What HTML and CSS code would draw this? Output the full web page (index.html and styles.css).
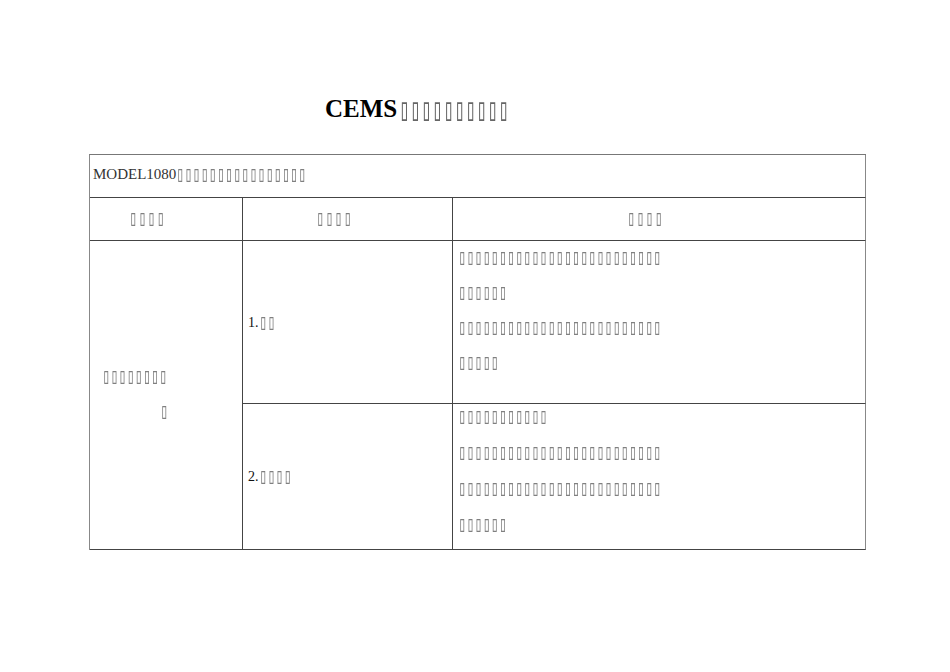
FILE: index.html
```html
<!DOCTYPE html>
<html lang="zh">
<head>
<meta charset="utf-8">
<title>CEMS</title>
<link rel="stylesheet" href="styles.css">
</head>
<body>
<div class="page">
  <h1 class="title">CEMS <span class="t tt">▯▯▯▯▯▯▯▯▯▯</span></h1>
  <div class="table">
    <div class="cell head-row"><span>MODEL1080<span class="t th">▯▯▯▯▯▯▯▯▯▯▯▯▯▯▯▯</span></span></div>
    <div class="cell hc hc1"><span class="t hx">▯▯▯▯</span></div>
    <div class="cell hc hc2"><span class="t hx">▯▯▯▯</span></div>
    <div class="cell hc hc3"><span class="t hx">▯▯▯▯</span></div>
    <div class="cell c-cat">
      <div class="cat-l1"><span class="t">▯▯▯▯▯▯▯▯</span></div>
      <div class="cat-l2"><span class="t">▯</span></div>
    </div>
    <div class="cell c-item c-item1"><span>1.<span class="t">▯▯</span></span></div>
    <div class="cell c-desc c-desc1">
      <div class="ln"><span class="t">▯▯▯▯▯▯▯▯▯▯▯▯▯▯▯▯▯▯▯▯▯▯▯▯▯</span></div>
      <div class="ln"><span class="t">▯▯▯▯▯▯</span></div>
      <div class="ln"><span class="t">▯▯▯▯▯▯▯▯▯▯▯▯▯▯▯▯▯▯▯▯▯▯▯▯▯</span></div>
      <div class="ln"><span class="t">▯▯▯▯▯</span></div>
    </div>
    <div class="cell c-item c-item2"><span>2.<span class="t">▯▯▯▯</span></span></div>
    <div class="cell c-desc c-desc2">
      <div class="lines">
        <div class="ln"><span class="t">▯▯▯▯▯▯▯▯▯▯▯</span></div>
        <div class="ln"><span class="t">▯▯▯▯▯▯▯▯▯▯▯▯▯▯▯▯▯▯▯▯▯▯▯▯▯</span></div>
        <div class="ln"><span class="t">▯▯▯▯▯▯▯▯▯▯▯▯▯▯▯▯▯▯▯▯▯▯▯▯▯</span></div>
        <div class="ln"><span class="t">▯▯▯▯▯▯</span></div>
      </div>
    </div>
  </div>
</div>
</body>
</html>
```
FILE: styles.css
```css
html, body {
  margin: 0;
  padding: 0;
  background: #ffffff;
}
body {
  font-family: "Liberation Serif", "Times New Roman", serif;
  color: #111;
}
.page {
  padding: 97px 0 0 89px;
  width: 777px;
}
.title {
  margin: 0 0 33px 236px;
  font-size: 25px;
  font-weight: bold;
  line-height: 24px;
  height: 24px;
  color: #000;
}
.t {
  display: inline-block;
  font-family: "DejaVu Sans Mono", monospace;
  font-weight: normal;
  color: #808080;
  font-size: 13.5px;
  letter-spacing: 0;
  transform: scaleY(1.6);
  transform-origin: 50% 60%;
  will-change: transform;
}
.tt {
  font-size: 18px;
  letter-spacing: 0.2px;
  color: #666;
  margin-left: -4px;
  transform: scaleY(1.75);
}
.th { letter-spacing: 0; }
.hx { letter-spacing: 1px; }
.table {
  display: grid;
  grid-template-columns: 153px 210px 413px;
  grid-template-rows: 43px 43px 163px 146px;
  border-top: 1px solid #777;
  border-left: 1px solid #888;
}
.cell {
  border-right: 1px solid #444;
  border-bottom: 1px solid #444;
  font-size: 14px;
}
.head-row {
  grid-column: 1 / 4;
  display: flex;
  align-items: center;
  padding-left: 3px;
  font-size: 15px;
  padding-bottom: 4px;
  border-right-color: #888;
  color: #333;
}
.hc {
  display: flex;
  align-items: center;
  padding-bottom: 2px;
}
.hc1 { padding-left: 39px; }
.hc2 { padding-left: 73px; }
.hc3 { padding-left: 174px; border-right-color: #888; }
.c-cat {
  grid-row: 3 / 5;
  display: flex;
  flex-direction: column;
  justify-content: center;
  line-height: 35px;
}
.cat-l1 { padding-left: 12px; }
.cat-l2 { padding-left: 70px; }
.c-item {
  display: flex;
  align-items: center;
  padding-left: 5px;
}
.c-desc {
  padding-left: 5px;
  border-right-color: #888;
}
.c-desc1 .ln { line-height: 35px; height: 35px; }
.c-desc2 .ln { line-height: 36px; height: 36px; }
.c-desc2 .lines { margin-top: -5px; }
```
